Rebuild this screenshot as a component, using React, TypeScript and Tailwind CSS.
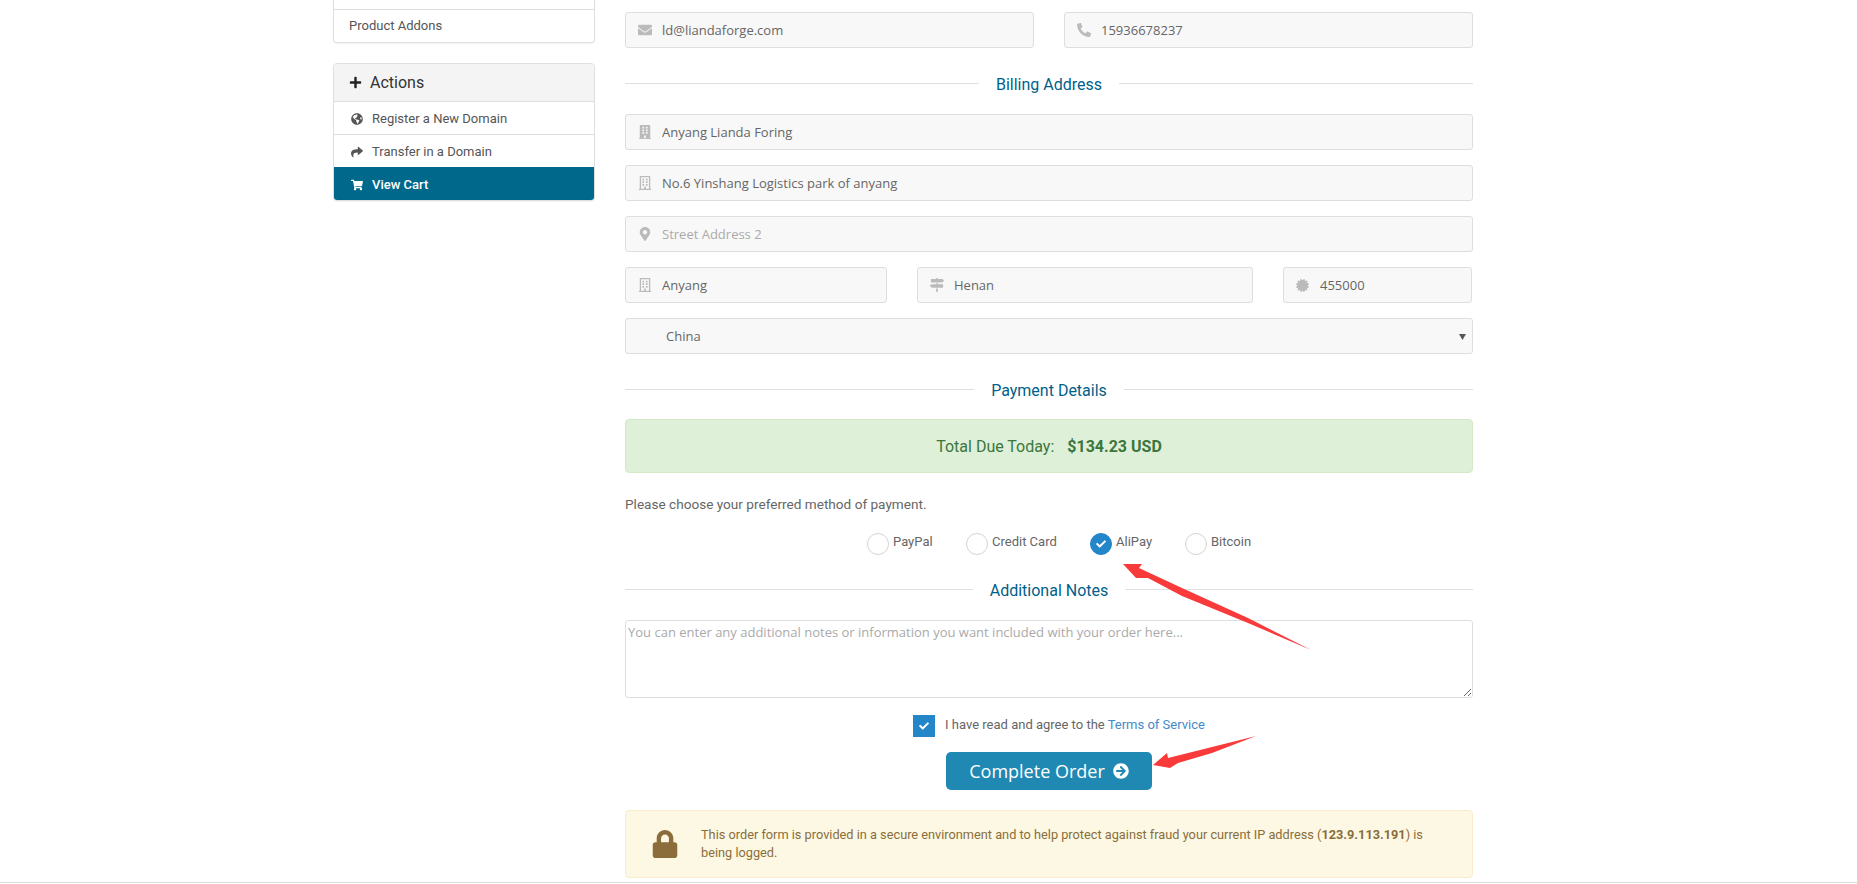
import { ReactNode } from "react"
import {
  FaArrowCircleRight,
  FaBuilding,
  FaCertificate,
  FaCheck,
  FaEnvelope,
  FaGlobeAmericas,
  FaLock,
  FaMapMarkerAlt,
  FaMapSigns,
  FaPhone,
  FaPlus,
  FaRegBuilding,
  FaShare,
  FaShoppingCart,
} from "react-icons/fa"

const roboto = "font-['Roboto',sans-serif]"
const openSans = "font-['Open_Sans',sans-serif]"

function Field({ icon, value, placeholder, className = "" }: { icon: ReactNode; value?: string; placeholder?: string; className?: string }) {
  return (
    <div className={`flex h-[36px] items-center rounded-[3px] border border-[#dedede] bg-[#f8f8f8] ${className}`}>
      <span className="flex w-[33px] shrink-0 justify-center pl-[4px] text-[14px] text-[#bbb]">{icon}</span>
      <input
        readOnly
        value={value}
        placeholder={placeholder}
        className={`ml-[3px] w-full bg-transparent pt-px text-[13px] text-[#666] outline-none placeholder:text-[#aaa] ${openSans}`}
      />
    </div>
  )
}

function Divider({ title, className }: { title: string; className: string }) {
  return (
    <div className={`flex h-[20px] items-center gap-[17px] ${className}`}>
      <div className="h-px flex-1 bg-[#dfdfdf]" />
      <span className={`translate-y-[2px] text-[16px] text-[#005f8a] ${roboto}`}>{title}</span>
      <div className="h-px flex-1 bg-[#dfdfdf]" />
    </div>
  )
}

function SideLink({ icon, label, active }: { icon: ReactNode; label: string; active?: boolean }) {
  return (
    <div className={`flex h-[33px] items-center border-t pt-px ${active ? "border-[#00688b] bg-[#00688b] font-medium text-white" : "border-[#dfdfdf] text-[#555]"}`}>
      <span className="flex w-[37px] justify-center pl-[9px] text-[12px]">{icon}</span>
      <span className="ml-[1px] text-[13px]">{label}</span>
    </div>
  )
}

function Radio({ label, checked, className = "" }: { label: string; checked?: boolean; className?: string }) {
  return (
    <div className={`flex items-center ${className}`}>
      <span className={`flex h-[22px] w-[22px] items-center justify-center rounded-full border ${checked ? "border-[#2386c8] bg-[#2386c8]" : "border-[#d6d4cc] bg-white"}`}>
        {checked && <FaCheck className="text-[10px] text-white" />}
      </span>
      <span className="ml-[4px] -translate-y-[2px] text-[13px] text-[#666]">{label}</span>
    </div>
  )
}

export default function App() {
  return (
    <div className={`relative h-[884px] overflow-hidden bg-white ${roboto}`}>
      <div className="flex pl-[333px]">
        <aside className="w-[262px] shrink-0">
          <div className="rounded-b-[4px] border border-t-0 border-[#dfdfdf] pt-[9px] shadow-[0_1px_1px_rgba(0,0,0,0.05)]">
            <div className="flex h-[33px] items-center border-t border-[#dfdfdf] pl-[15px] text-[13px] text-[#555]">Product Addons</div>
          </div>
          <div className="mt-[20px] overflow-hidden rounded-[4px] border border-[#dfdfdf] shadow-[0_1px_1px_rgba(0,0,0,0.05)]">
            <div className="flex h-[37px] items-center bg-[#f4f4f4] pl-[15px] text-[16px] text-[#333]">
              <FaPlus className="text-[13px] text-[#222]" />
              <span className="ml-[8px]">Actions</span>
            </div>
            <SideLink icon={<FaGlobeAmericas />} label="Register a New Domain" />
            <SideLink icon={<FaShare />} label="Transfer in a Domain" />
            <SideLink icon={<FaShoppingCart />} label="View Cart" active />
          </div>
        </aside>

        <main className="ml-[30px] w-[848px] shrink-0 pt-[12px]">
          <div className="flex gap-[30px]">
            <Field className="flex-1" icon={<FaEnvelope />} value="ld@liandaforge.com" />
            <Field className="flex-1" icon={<FaPhone className="-scale-x-100" />} value="15936678237" />
          </div>

          <Divider title="Billing Address" className="mt-[25px]" />

          <div className="mt-[21px] flex flex-col gap-[15px]">
            <Field icon={<FaBuilding />} value="Anyang Lianda Foring" />
            <Field icon={<FaRegBuilding />} value="No.6 Yinshang Logistics park of anyang" />
            <Field icon={<FaMapMarkerAlt />} placeholder="Street Address 2" />
            <div className="flex gap-[30px]">
              <Field className="w-[262px]" icon={<FaRegBuilding />} value="Anyang" />
              <Field className="w-[336px]" icon={<FaMapSigns />} value="Henan" />
              <Field className="w-[189px]" icon={<FaCertificate className="text-[13px]" />} value="455000" />
            </div>
            <div className={`flex h-[36px] items-center justify-between rounded-[3px] border border-[#dedede] bg-[#f8f8f8] pl-[40px] pr-[6px] pt-px text-[13px] text-[#666] ${openSans}`}>
              <span>China</span>
              <svg width="7" height="6" viewBox="0 0 7 6"><path d="M0 0h7L3.5 6z" fill="#555" /></svg>
            </div>
          </div>

          <Divider title="Payment Details" className="mt-[25px]" />

          <div className="mt-[20px] flex h-[54px] items-center justify-center rounded-[4px] border border-[#d6e9c6] bg-[#dff0d8] pt-[2px] text-[16px] text-[#3c763d]">
            Total Due Today:
            <strong className="ml-[13px] font-bold">$134.23 USD</strong>
          </div>

          <p className="mt-[21px] text-[13.6px] leading-[20px] text-[#666]">Please choose your preferred method of payment.</p>

          <div className="mt-[19px] flex h-[22px] pl-[242px]">
            <Radio className="w-[99px]" label="PayPal" />
            <Radio className="w-[124px]" label="Credit Card" />
            <Radio className="w-[95px]" label="AliPay" checked />
            <Radio label="Bitcoin" />
          </div>

          <Divider title="Additional Notes" className="mt-[24px]" />

          <textarea
            readOnly
            placeholder="You can enter any additional notes or information you want included with your order here..."
            className={`mt-[21px] block h-[78px] w-full rounded-[3px] border border-[#dedede] bg-white px-[2px] py-[1px] text-[13px] leading-[20px] text-[#666] outline-none placeholder:text-[#aaa] ${openSans}`}
          />

          <div className="mt-[17px] flex h-[22px] items-center justify-center pl-[20px]">
            <span className="flex h-[22px] w-[22px] items-center justify-center bg-[#2386c8]">
              <FaCheck className="text-[10px] text-white" />
            </span>
            <span className="ml-[10px] -translate-y-px text-[13px] text-[#666]">
              I have read and agree to the <span className="text-[#428bca]">Terms of Service</span>
            </span>
          </div>

          <div className="mt-[15px] flex justify-center">
            <button className={`flex h-[38px] w-[206px] items-center justify-center gap-[8px] rounded-[5px] bg-[#2089b3] text-[18px] text-white ${openSans}`}>
              Complete Order
              <FaArrowCircleRight className="text-[16px]" />
            </button>
          </div>

          <div className="mt-[20px] flex h-[68px] items-center rounded-[4px] border border-[#faebcc] bg-[#fcf8e3] text-[12.75px] leading-[18px] text-[#8a6d3b]">
            <FaLock className="ml-[25px] shrink-0 text-[28px]" />
            <p className="ml-[22px] w-[735px]">
              This order form is provided in a secure environment and to help protect against fraud your current IP address (<strong className="font-bold">123.9.113.191</strong>) is being logged.
            </p>
          </div>
        </main>
      </div>

      <div className="absolute inset-x-0 top-[882px] h-px bg-[#dfdfdf]" />

      {/* annotation arrows drawn on the screenshot */}
      <svg className="pointer-events-none absolute left-0 top-0" width="1857" height="884">
        <polygon points="1123,564 1142,564 1139,568 1182,588 1248,618 1311,650 1248,623 1182,596 1148,578 1136,578" fill="#f93a3a" />
        <polygon points="1153,765 1167,753 1168,758 1212,747 1256,736 1212,753 1178,763 1170,768" fill="#f93a3a" />
      </svg>
    </div>
  )
}
